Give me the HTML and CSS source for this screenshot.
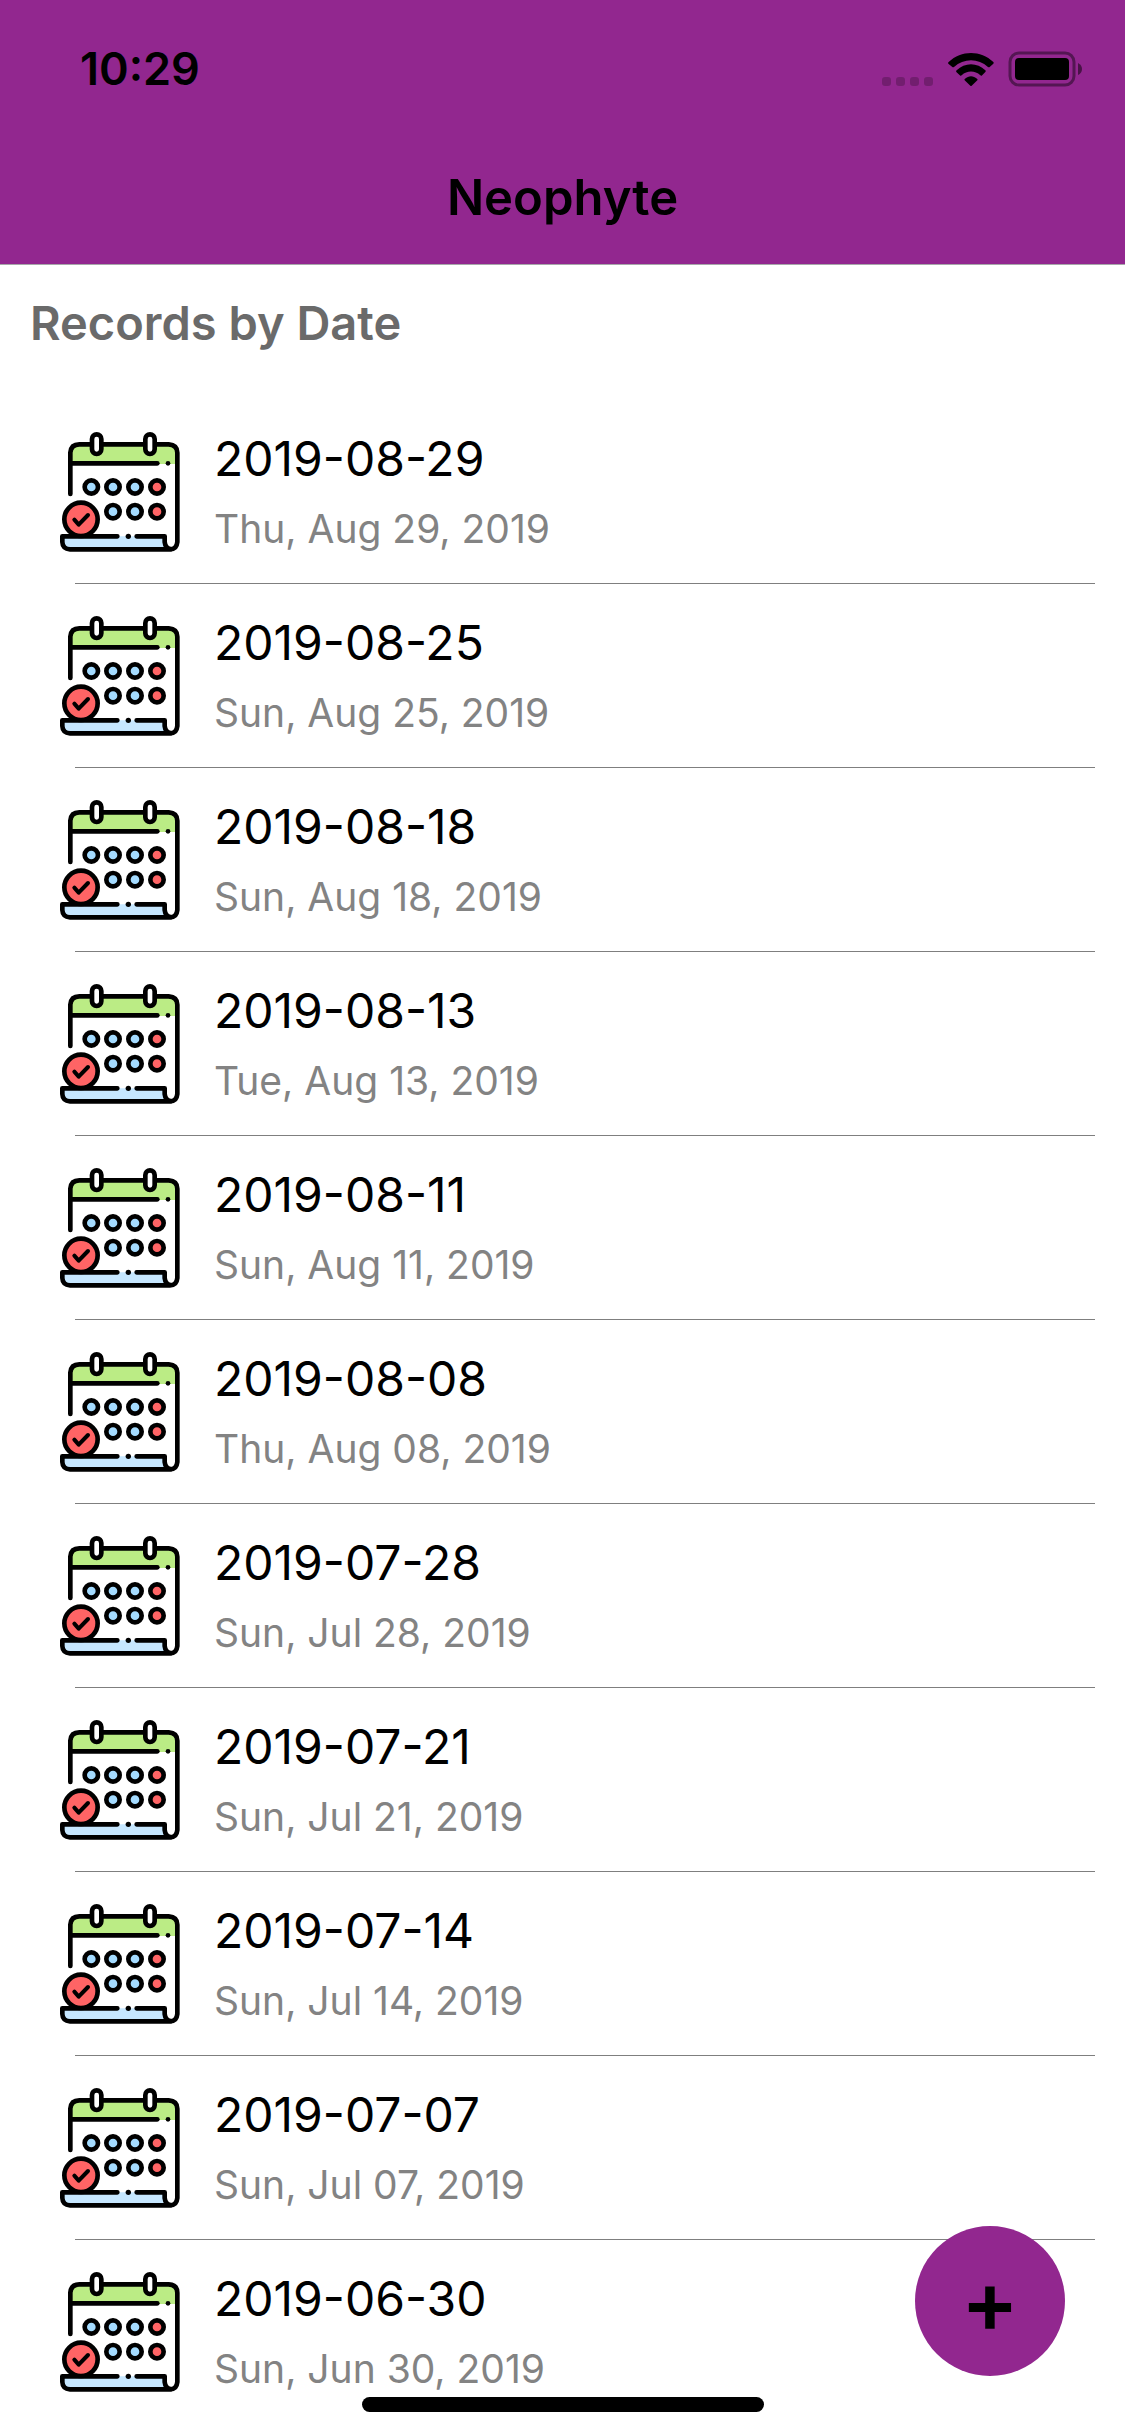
FILE: index.html
```html
<!DOCTYPE html>
<html lang="en">
<head>
<meta charset="utf-8">
<meta name="viewport" content="width=device-width">
<title>Neophyte</title>
<link rel="stylesheet" href="styles.css">
</head>
<body>
<svg class="sprite" aria-hidden="true">
  <symbol id="calendar" viewBox="0 0 360 360">
    <path fill="#fff" d="M32 90H352V350H32Z"/>
    <path fill="#bbec85" d="M32 94V62Q34 36 60 36H326Q352 38 352 62V96H32Z"/>
    <path fill="#c6e7ff" d="M6 313H314V352H30Q8 350 6 330Z"/>
    <g fill="none" stroke="#000" stroke-width="14" stroke-linecap="round" stroke-linejoin="round">
      <path d="M31 186V62Q33 37 58 37H326Q352 39 352 62V330Q350 352 330 352H30Q8 351 7 330V313H172M230 313H314V330Q316 350 334 352"/>
      <path d="M34 94H292"/>
      <rect x="96" y="7" width="28" height="59" rx="14" fill="#fff"/>
      <rect x="256" y="7" width="28" height="59" rx="14" fill="#fff"/>
      <g fill="#a4dbff">
        <circle cx="94" cy="165" r="20"/><circle cx="159" cy="165" r="20"/><circle cx="225" cy="165" r="20"/>
        <circle cx="159" cy="239" r="20"/><circle cx="225" cy="239" r="20"/>
      </g>
      <g fill="#ff6465">
        <circle cx="291" cy="165" r="20"/><circle cx="291" cy="239" r="20"/>
        <circle cx="63" cy="262" r="50"/>
      </g>
      <path stroke-width="12" d="M43 263L56 278L84 249"/>
    </g>
    <circle cx="324" cy="94" r="7"/>
    <circle cx="205" cy="313" r="8"/>
  </symbol>
</svg>

<header class="header">
  <div class="status">
    <span class="time">10:29</span>
    <div class="indicators">
      <svg class="signal" viewBox="0 0 51 33" aria-label="No signal">
        <g fill-opacity=".22"><rect y="24" width="9" height="9" rx="3"/><rect x="14" y="24" width="9" height="9" rx="3"/><rect x="28" y="24" width="9" height="9" rx="3"/><rect x="42" y="24" width="9" height="9" rx="3"/></g>
      </svg>
      <svg class="wifi" viewBox="0 0 138 99" aria-label="Wi-Fi">
        <path d="M1 32Q-1 29 2 27C40-9 98-9 136 27Q138 29 136 32L125 42Q123 44 120 42C91 15 47 15 18 42Q15 44 13 42Z"/>
        <path d="M25 57Q23 54 26 52C50 28 88 28 112 52Q115 54 112 57L101 68Q99 69 97 67C81 52 57 52 41 67Q39 69 37 68Z"/>
        <path d="M50 82Q48 79 51 77C62 67 76 67 87 77Q90 79 88 82L71 98Q69 100 67 98Z"/>
      </svg>
      <svg class="battery" viewBox="0 0 73 34" aria-label="Battery full">
        <rect x="1" y="1" width="64" height="32" rx="9" fill="none" stroke="#000" stroke-opacity=".42" stroke-width="3"/>
        <rect x="6" y="6" width="54" height="22" rx="4"/>
        <path fill-opacity=".5" d="M69 11Q73 13 73 17T69 23Z"/>
      </svg>
    </div>
  </div>
  <h1 class="title">Neophyte</h1>
</header>

<main>
  <h2 class="section">Records by Date</h2>
  <ul class="records">
    <li><a class="record" href="#"><svg class="icon"><use href="#calendar"/></svg><span class="text"><span class="name">2019-08-29</span><span class="date">Thu, Aug 29, 2019</span></span></a></li>
    <li><a class="record" href="#"><svg class="icon"><use href="#calendar"/></svg><span class="text"><span class="name">2019-08-25</span><span class="date">Sun, Aug 25, 2019</span></span></a></li>
    <li><a class="record" href="#"><svg class="icon"><use href="#calendar"/></svg><span class="text"><span class="name">2019-08-18</span><span class="date">Sun, Aug 18, 2019</span></span></a></li>
    <li><a class="record" href="#"><svg class="icon"><use href="#calendar"/></svg><span class="text"><span class="name">2019-08-13</span><span class="date">Tue, Aug 13, 2019</span></span></a></li>
    <li><a class="record" href="#"><svg class="icon"><use href="#calendar"/></svg><span class="text"><span class="name">2019-08-11</span><span class="date">Sun, Aug 11, 2019</span></span></a></li>
    <li><a class="record" href="#"><svg class="icon"><use href="#calendar"/></svg><span class="text"><span class="name">2019-08-08</span><span class="date">Thu, Aug 08, 2019</span></span></a></li>
    <li><a class="record" href="#"><svg class="icon"><use href="#calendar"/></svg><span class="text"><span class="name">2019-07-28</span><span class="date">Sun, Jul 28, 2019</span></span></a></li>
    <li><a class="record" href="#"><svg class="icon"><use href="#calendar"/></svg><span class="text"><span class="name">2019-07-21</span><span class="date">Sun, Jul 21, 2019</span></span></a></li>
    <li><a class="record" href="#"><svg class="icon"><use href="#calendar"/></svg><span class="text"><span class="name">2019-07-14</span><span class="date">Sun, Jul 14, 2019</span></span></a></li>
    <li><a class="record" href="#"><svg class="icon"><use href="#calendar"/></svg><span class="text"><span class="name">2019-07-07</span><span class="date">Sun, Jul 07, 2019</span></span></a></li>
    <li><a class="record" href="#"><svg class="icon"><use href="#calendar"/></svg><span class="text"><span class="name">2019-06-30</span><span class="date">Sun, Jun 30, 2019</span></span></a></li>
  </ul>
</main>

<button class="add" type="button" aria-label="Add record">+</button>
<div class="home-bar"></div>
</body>
</html>
```
FILE: styles.css
```css
* {
  box-sizing: border-box;
}

body {
  margin: 0;
  background: #fff;
  color: #000;
  font-family: Inter, "Liberation Sans", sans-serif;
}

.sprite {
  display: block;
  width: 0;
  height: 0;
}

.header {
  background: #92278f;
  border-bottom: 1px solid #a7a7aa;
}

.status {
  display: flex;
  align-items: center;
  justify-content: space-between;
  height: 132px;
  padding: 6px 43px 0 80px;
}

.time {
  font-size: 45px;
  line-height: 60px;
  font-weight: 600;
}

.indicators {
  display: flex;
  align-items: center;
  gap: 15px;
}

.signal {
  width: 51px;
  height: 33px;
}

.wifi {
  width: 46px;
  height: 33px;
}

.battery {
  width: 73px;
  height: 34px;
  overflow: visible;
}

.title {
  margin: 0;
  padding: 36px 0;
  font-size: 49px;
  line-height: 60px;
  font-weight: 600;
  text-align: center;
}

.section {
  margin: 0;
  padding: 28px 30px 47px;
  color: #6a6a6a;
  font-size: 47px;
  line-height: 60px;
  font-weight: 600;
}

.records {
  margin: 0;
  padding: 0;
  list-style: none;
}

.records li:not(:last-child)::after {
  content: "";
  display: block;
  height: 1px;
  margin: 0 30px 0 75px;
  background: #7f7f7f;
}

.record {
  display: flex;
  align-items: center;
  gap: 34px;
  height: 183px;
  padding: 0 60px;
  color: inherit;
  text-decoration: none;
}

.icon {
  flex: none;
  width: 120px;
  height: 120px;
}

.text {
  display: flex;
  flex-direction: column;
  gap: 10px;
  padding-top: 5px;
}

.name {
  font-size: 48px;
  line-height: 60px;
}

.date {
  color: #838383;
  font-size: 39px;
  line-height: 60px;
}

.add {
  position: fixed;
  right: 60px;
  bottom: 60px;
  width: 150px;
  height: 150px;
  padding: 0;
  border: 0;
  border-radius: 50%;
  background: #92278f;
  color: #000;
  font-family: inherit;
  font-size: 86px;
  font-weight: 600;
}

.home-bar {
  position: fixed;
  bottom: 24px;
  left: 50%;
  width: 402px;
  height: 15px;
  border-radius: 8px;
  background: #000;
  transform: translateX(-50%);
}
```
